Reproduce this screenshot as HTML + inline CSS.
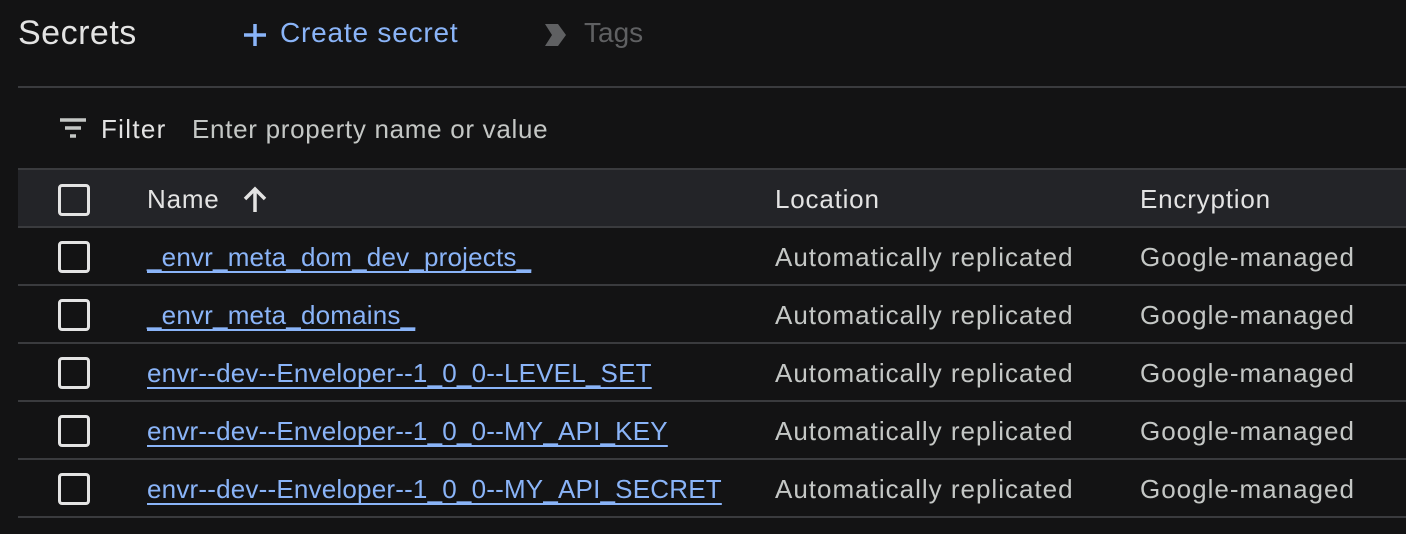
<!DOCTYPE html>
<html><head><style>
body{margin:0;width:1406px;height:534px;background:#131314;font-family:"Liberation Sans",sans-serif;color:#e3e3e3;position:relative;overflow:hidden}
.a{position:absolute;white-space:nowrap}
.line{position:absolute;left:18px;right:0;height:2px;background:#3a3b3e}
.cb{position:absolute;left:58px;width:26px;height:26px;border:3px solid #e3e3e3;border-radius:4px}
.t{font-size:26px;line-height:30px;letter-spacing:0.8px}
.lnk{color:#8ab4f8;text-decoration:underline;text-underline-offset:5px;text-decoration-thickness:2px;letter-spacing:0.2px}
.g{color:#c4c7c5;letter-spacing:1px}
</style></head><body>
<div class="a" style="left:18px;top:14px;font-size:34px;letter-spacing:0.5px;color:#e3e3e3">Secrets</div>
<svg class="a" style="left:242px;top:22px" width="26" height="26"><path d="M13 2v22M2 13h22" stroke="#8ab4f8" stroke-width="3.5"/></svg>
<div class="a" style="left:280px;top:17px;font-size:28px;letter-spacing:0.8px;color:#8ab4f8">Create secret</div>
<svg class="a" style="left:545px;top:24px" width="26" height="22"><path d="M0 0h13l8 11-8 11H0l7-11z" fill="#5f6062"/></svg>
<div class="a" style="left:584px;top:17px;font-size:28px;color:#5f6062">Tags</div>
<div class="line" style="top:86px"></div>
<svg class="a" style="left:60px;top:118px" width="28" height="22"><path d="M0 2h26M5 10h16M10 18h6" stroke="#c4c7c5" stroke-width="3.5"/></svg>
<div class="a t" style="left:101px;top:114px;letter-spacing:1.3px;color:#e3e3e3">Filter</div>
<div class="a t g" style="left:192px;top:114px;letter-spacing:0.7px">Enter property name or value</div>
<div class="a" style="left:18px;right:0;top:169px;height:58px;background:#232428"></div>
<div class="line" style="top:168px"></div>
<div class="cb" style="top:184px"></div>
<div class="a t" style="left:147px;top:184px">Name</div>
<svg class="a" style="left:242px;top:186px" width="26" height="28"><path d="M13 26V3M3 13L13 3l10 10" stroke="#e3e3e3" stroke-width="3.5" fill="none"/></svg>
<div class="a t" style="left:775px;top:184px">Location</div>
<div class="a t" style="left:1140px;top:184px">Encryption</div>
<div class="line" style="top:226px"></div>

<div class="cb" style="top:241px"></div><div class="a t lnk" style="left:147px;top:242px">_envr_meta_dom_dev_projects_</div><div class="a t g" style="left:775px;top:242px">Automatically replicated</div><div class="a t g" style="left:1140px;top:242px">Google-managed</div>
<div class="line" style="top:284px"></div>
<div class="cb" style="top:299px"></div><div class="a t lnk" style="left:147px;top:300px">_envr_meta_domains_</div><div class="a t g" style="left:775px;top:300px">Automatically replicated</div><div class="a t g" style="left:1140px;top:300px">Google-managed</div>
<div class="line" style="top:342px"></div>
<div class="cb" style="top:357px"></div><div class="a t lnk" style="left:147px;top:358px">envr--dev--Enveloper--1_0_0--LEVEL_SET</div><div class="a t g" style="left:775px;top:358px">Automatically replicated</div><div class="a t g" style="left:1140px;top:358px">Google-managed</div>
<div class="line" style="top:400px"></div>
<div class="cb" style="top:415px"></div><div class="a t lnk" style="left:147px;top:416px">envr--dev--Enveloper--1_0_0--MY_API_KEY</div><div class="a t g" style="left:775px;top:416px">Automatically replicated</div><div class="a t g" style="left:1140px;top:416px">Google-managed</div>
<div class="line" style="top:458px"></div>
<div class="cb" style="top:473px"></div><div class="a t lnk" style="left:147px;top:474px">envr--dev--Enveloper--1_0_0--MY_API_SECRET</div><div class="a t g" style="left:775px;top:474px">Automatically replicated</div><div class="a t g" style="left:1140px;top:474px">Google-managed</div>
<div class="line" style="top:516px"></div>
</body></html>
